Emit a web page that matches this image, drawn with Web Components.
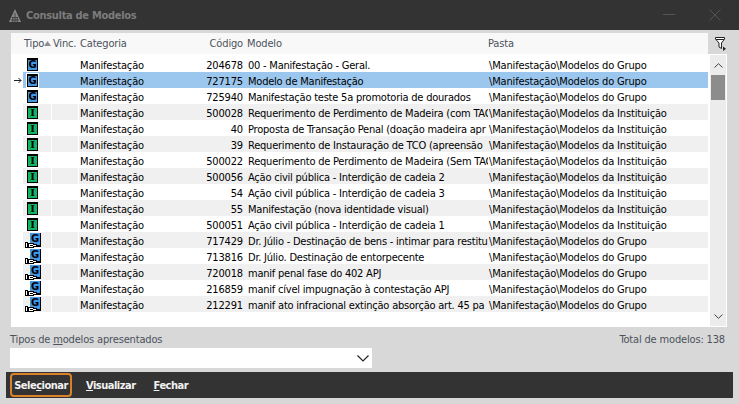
<!DOCTYPE html>
<html lang="pt">
<head>
<meta charset="utf-8">
<title>Consulta de Modelos</title>
<style>
  html, body { margin: 0; padding: 0; background: #d8d8d8; }
  body { font: 11px "DejaVu Sans Condensed", "DejaVu Sans", sans-serif; letter-spacing: -0.16px; }
</style>
</head>
<body>
<consulta-window>
  <title-bar slot="title">Consulta de Modelos</title-bar>
  <models-grid slot="grid"></models-grid>
  <type-filter slot="filter"></type-filter>
  <action-bar slot="actions"></action-bar>
</consulta-window>

<script>
const G = 'Modelos do Grupo';
const I = 'Modelos da Instituição';
const rows = [
  ['g', '204678', '00 - Manifestação - Geral.', G],
  ['g', '727175', 'Modelo de Manifestação', G],
  ['g', '725940', 'Manifestação teste 5a promotoria de dourados', G],
  ['i', '500028', 'Requerimento de Perdimento de Madeira (com TAC', I],
  ['i', '40', 'Proposta de Transação Penal (doação madeira apr', I],
  ['i', '39', 'Requerimento de Instauração de TCO (apreensão', I],
  ['i', '500022', 'Requerimento de Perdimento de Madeira (Sem TAC', I],
  ['i', '500056', 'Ação civil pública - Interdição de cadeia 2', I],
  ['i', '54', 'Ação civil pública - Interdição de cadeia 3', I],
  ['i', '55', 'Manifestação (nova identidade visual)', I],
  ['i', '500051', 'Ação civil pública - Interdição de cadeia 1', I],
  ['s', '717429', 'Dr. Júlio - Destinação de bens - intimar para restitu', G],
  ['s', '713816', 'Dr. Júlio. Destinação de entorpecente', G],
  ['s', '720018', 'manif penal fase do 402 APJ', G],
  ['s', '216859', 'manif cível impugnação à contestação APJ', G],
  ['s', '212291', 'manif ato infracional extinção absorção art. 45 pa', G],
];

class ConsultaWindow extends HTMLElement {
  constructor() {
    super();
    this.attachShadow({ mode: 'open' });
    this.shadowRoot.innerHTML = `
      <style>
        :host { display: flex; flex-direction: column; width: 739px; height: 404px; background: #d8d8d8; overflow: hidden; }
        .grid { display: block; padding: 3px 12px 0 11px; }
        .filter { display: block; padding: 6px 10px 0; }
        .actions { display: block; padding: 4px 6px 0; }
      </style>
      <slot name="title"></slot>
      <div class="grid"><slot name="grid"></slot></div>
      <div class="filter"><slot name="filter"></slot></div>
      <div class="actions"><slot name="actions"></slot></div>
    `;
  }
}

class TitleBar extends HTMLElement {
  constructor() {
    super();
    this.attachShadow({ mode: 'open' });
    this.shadowRoot.innerHTML = `
      <style>
        :host { display: flex; align-items: center; height: 30px; background: #333; color: #7c7c7c; font-weight: bold; letter-spacing: -0.3px; padding: 0 18px 0 9px; box-sizing: border-box; }
        .logo { margin-right: 5px; }
        .text { flex: 1; }
        .btns { display: flex; align-items: center; gap: 34px; }
      </style>
      <svg class="logo" width="12" height="13" viewBox="0 0 12 13">
        <path d="M6 0 L12 13 H0 Z" fill="#8a8a8a"/>
        <path d="M6 4 V13 M3.800 8 V13 M8.200 8 V13 M2 11 H10 M3 8.500 H9" stroke="#333" stroke-width="0.8" fill="none"/>
      </svg>
      <span class="text"><slot></slot></span>
      <span class="btns">
        <svg width="12" height="12" viewBox="0 0 12 12"><path d="M0 5.500 H12" stroke="#555" stroke-width="1"/></svg>
        <svg width="12" height="12" viewBox="0 0 12 12"><path d="M0.500 0.500 L11.500 11.500 M11.500 0.500 L0.500 11.500" stroke="#555" stroke-width="1"/></svg>
      </span>
    `;
  }
}

class TypeIcon extends HTMLElement {
  constructor() {
    super();
    this.attachShadow({ mode: 'open' });
  }
  connectedCallback() {
    const kind = this.getAttribute('kind');
    const letter = kind === 'i' ? 'I' : 'G';
    const bg = kind === 'i' ? '#12b565' : '#4296e6';
    const shortcut = kind === 's';
    this.shadowRoot.innerHTML = `
      <style>
        :host { display: block; position: relative; width: 20px; height: 16px; }
        .box {
          position: absolute; left: ${shortcut ? 7 : 4}px; top: ${shortcut ? 1 : 2}px;
          width: 11px; height: ${shortcut ? 14 : 13}px; box-sizing: border-box;
          background: ${bg}; border: 1px solid #000; ${shortcut ? 'border-width: 0 1px 2px 0;' : 'border-top-width: 2px;'}
          display: flex; align-items: center; justify-content: center;
          font: bold 10px ${kind === 'i' ? '"DejaVu Serif", serif' : '"DejaVu Sans", sans-serif'}; letter-spacing: 0; color: #000; line-height: 1;
        }
        :host([selected]) .box { outline: 1px solid #fff; }
        svg { position: absolute; left: 2px; top: 10px; }
      </style>
      <div class="box">${letter}</div>
      ${shortcut ? `<svg width="12" height="6" viewBox="0 0 12 6" shape-rendering="crispEdges">
        <rect x="0.500" y="0.500" width="2" height="5" fill="#fff" stroke="#000"/>
        <path d="M3.500 1.500 H8.500 V2.500 H11.500 V4.500 H8.500 V5.500 H3.500 Z" fill="#fff" stroke="#000"/>
        <path d="M5 3.500 H8" stroke="#000" fill="none"/>
      </svg>` : ''}
    `;
  }
}

class ModelRow extends HTMLElement {
  constructor() {
    super();
    this.attachShadow({ mode: 'open' });
    this.shadowRoot.innerHTML = `
      <style>
        :host { display: grid; grid-template-columns: 12px 29px 27px 120px 44px 245px 1fr; height: 16px; line-height: 20px; color: #000; white-space: nowrap; }
        div { overflow: hidden; height: 16px; }
        .tipo, .vinc { margin-right: 1px; }
        :host([alt]) :is(.tipo, .vinc, .cat, .cod, .modelo, .pasta) { background: #f0f0f0; }
        :host([selected]) :is(.tipo, .vinc, .cat, .cod, .modelo, .pasta) { background: #9bc7ee; }
        :host([selected]) :is(.tipo, .vinc) { margin-right: 0; }
        .cat { padding-left: 1px; }
        .cod { text-align: right; }
        .modelo { padding-left: 5px; letter-spacing: -0.22px; }
        .pasta { padding-left: 1px; }
        .arrow { display: flex; align-items: center; justify-content: flex-end; padding-right: 1px; padding-top: 1px; box-sizing: border-box; }
      </style>
      <div class="arrow"></div>
      <div class="tipo"></div>
      <div class="vinc"></div>
      <div class="cat">Manifestação</div>
      <div class="cod"></div>
      <div class="modelo"></div>
      <div class="pasta"></div>
    `;
  }
  connectedCallback() {
    const s = this.shadowRoot;
    const icon = document.createElement('type-icon');
    icon.setAttribute('kind', this.getAttribute('kind'));
    if (this.hasAttribute('selected')) icon.setAttribute('selected', '');
    s.querySelector('.tipo').appendChild(icon);
    s.querySelector('.cod').textContent = this.getAttribute('code');
    s.querySelector('.modelo').textContent = this.getAttribute('model');
    s.querySelector('.pasta').textContent = '\\Manifestação\\' + this.getAttribute('folder');
    if (this.hasAttribute('selected')) {
      s.querySelector('.arrow').innerHTML = '<svg width="8" height="7" viewBox="0 0 8 7"><path d="M0 3.500H7M4.500 1 L7 3.500 L4.500 6" stroke="#222" fill="none"/></svg>';
    }
  }
}

class ModelsGrid extends HTMLElement {
  constructor() {
    super();
    this.attachShadow({ mode: 'open' });
    this.shadowRoot.innerHTML = `
      <style>
        :host { display: block; }
        .head { display: grid; grid-template-columns: 1fr 19px; height: 21px; }
        .cols { display: grid; grid-template-columns: 12px 29px 27px 120px 44px 245px 1fr; background: #f8f8f8; line-height: 21px; color: #4c525c; white-space: nowrap; margin-bottom: 1px; }
        .cols .tp { position: relative; padding-left: 1px; }
        .cols .sort { position: absolute; left: 21px; top: 8px; }
        .cols .vi { padding-left: 1px; }
        .cols .ca { padding-left: 1px; }
        .cols .cod { text-align: right; }
        .cols .mo { padding-left: 4px; }
        .filter-btn { display: flex; justify-content: flex-end; padding: 4px 1px 0 0; }
        .body { display: grid; grid-template-columns: 1fr 19px; background: #fff; height: 273px; }
        .rows { padding-top: 2px; }
      </style>
      <div class="head">
        <div class="cols">
          <span></span>
          <span class="tp">Tipo<svg class="sort" width="7" height="5" viewBox="0 0 7 5"><path d="M3.500 0 L7 5 H0 Z" fill="#8e8e8e"/></svg></span>
          <span class="vi">Vinc.</span>
          <span class="ca">Categoria</span>
          <span class="cod">Código</span>
          <span class="mo">Modelo</span>
          <span>Pasta</span>
        </div>
        <div class="filter-btn">
          <svg width="11" height="14" viewBox="0 0 11 14">
            <path d="M0.500 0.500 H9.500 V2 L6.500 6 V11.500 L4 10 V6 L0.500 2 Z M1 2.500 H9" fill="#fff" stroke="#222"/>
            <path d="M8 9.500 L11 11.800 L8 14 Z" fill="#222"/>
          </svg>
        </div>
      </div>
      <div class="body">
        <div class="rows"></div>
        <grid-scrollbar></grid-scrollbar>
      </div>
    `;
    const wrap = this.shadowRoot.querySelector('.rows');
    rows.forEach((r, i) => {
      const row = document.createElement('model-row');
      row.setAttribute('kind', r[0]);
      row.setAttribute('code', r[1]);
      row.setAttribute('model', r[2]);
      row.setAttribute('folder', r[3]);
      if (i === 1) row.setAttribute('selected', '');
      else if (i % 2 === 1) row.setAttribute('alt', '');
      wrap.appendChild(row);
    });
  }
}

class GridScrollbar extends HTMLElement {
  constructor() {
    super();
    this.attachShadow({ mode: 'open' });
    this.shadowRoot.innerHTML = `
      <style>
        :host { display: flex; flex-direction: column; margin: 1px 1px 1px 2px; background: #ececec; }
        .btn { height: 20px; display: flex; align-items: center; justify-content: center; }
        .track { flex: 1; padding: 0 1px; }
        .thumb { height: 25px; background: #8c8c8c; }
      </style>
      <div class="btn"><svg width="9" height="5" viewBox="0 0 9 5"><path d="M0.500 4.500 L4.500 0.700 L8.500 4.500" stroke="#444" fill="none"/></svg></div>
      <div class="track"><div class="thumb"></div></div>
      <div class="btn"><svg width="9" height="5" viewBox="0 0 9 5"><path d="M0.500 0.500 L4.500 4.300 L8.500 0.500" stroke="#444" fill="none"/></svg></div>
    `;
  }
}

class TypeFilter extends HTMLElement {
  constructor() {
    super();
    this.attachShadow({ mode: 'open' });
    this.shadowRoot.innerHTML = `
      <style>
        :host { display: block; color: #4c525c; }
        .labels { display: flex; justify-content: space-between; line-height: 14px; padding-right: 4px; }
        .combo { width: 362px; height: 20px; background: #fff; display: flex; align-items: center; justify-content: flex-end; padding-right: 3px; box-sizing: border-box; margin-top: 1px; }
        u { text-underline-offset: 1px; }
      </style>
      <div class="labels">
        <span>Tipos de <u>m</u>odelos apresentados</span>
        <span>Total de modelos: 138</span>
      </div>
      <div class="combo">
        <svg width="12" height="7" viewBox="0 0 12 7"><path d="M0.500 0.500 L6 6 L11.500 0.500" stroke="#222" stroke-width="1.200" fill="none"/></svg>
      </div>
    `;
  }
}

class ActionBar extends HTMLElement {
  constructor() {
    super();
    this.attachShadow({ mode: 'open' });
    this.shadowRoot.innerHTML = `
      <style>
        :host { display: flex; align-items: center; height: 26px; background: #333; color: #f2f2f2; font-weight: bold; letter-spacing: -0.5px; padding-left: 4px; box-sizing: border-box; }
        .btn { display: flex; align-items: center; justify-content: center; height: 24px; box-sizing: border-box; padding: 0 4px; }
        .btn.primary { width: 62px; border: 2px solid #d9822b; border-radius: 4px; margin-right: 10px; }
        .btn + .btn { margin-right: 10px; }
        u { text-underline-offset: 1px; }
      </style>
      <div class="btn primary"><span>Sele<u>c</u>ionar</span></div>
      <div class="btn"><span><u>V</u>isualizar</span></div>
      <div class="btn"><span><u>F</u>echar</span></div>
    `;
  }
}

customElements.define('consulta-window', ConsultaWindow);
customElements.define('title-bar', TitleBar);
customElements.define('type-icon', TypeIcon);
customElements.define('model-row', ModelRow);
customElements.define('models-grid', ModelsGrid);
customElements.define('grid-scrollbar', GridScrollbar);
customElements.define('type-filter', TypeFilter);
customElements.define('action-bar', ActionBar);
</script>
</body>
</html>
